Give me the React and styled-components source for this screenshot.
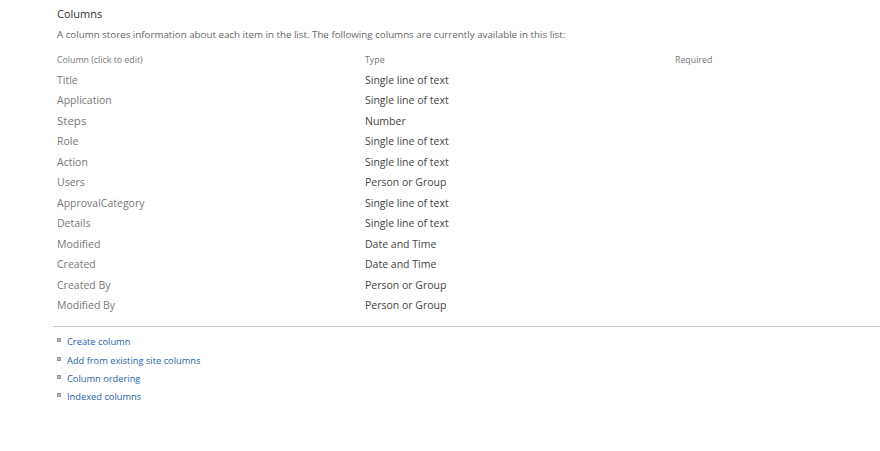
import React from "react";
import styled, { createGlobalStyle } from "styled-components";

const Global = createGlobalStyle`
  html, body { margin: 0; padding: 0; background: #fff; }
  body { font-family: "Open Sans", "Noto Sans", sans-serif; }
`;

const Page = styled.div`
  width: 880px;
  height: 451px;
  padding: 6px 0 0 53px;
  box-sizing: border-box;
  overflow: hidden;
`;

const Section = styled.div`
  padding-left: 4px;
`;

const Heading = styled.div`
  font-size: 11px;
  color: #333;
  line-height: 16px;
`;

const Desc = styled.div`
  font-size: 9.75px;
  color: #666;
  margin-top: 5px;
  line-height: 16px;
`;

const Grid = styled.div`
  display: grid;
  grid-template-columns: 308px 310px 1fr;
  margin-top: 9px;
`;

const HeadCell = styled.div`
  font-size: 8.8px;
  color: #777;
  line-height: 16px;
  height: 16px;
  margin-bottom: 2px;
`;

const Cell = styled.div`
  font-size: ${(p) => (p.$big ? "11.5px" : "10.5px")};
  color: ${(p) => (p.$dark ? "#444" : "#777")};
  line-height: 20.45px;
  white-space: nowrap;
`;

const Divider = styled.hr`
  border: 0;
  border-top: 1px solid #c6c6c6;
  margin: 11px 0 0 0;
`;

const Links = styled.ul`
  list-style: none;
  margin: 5px 0 0 4px;
  padding: 0;
`;

const LinkItem = styled.li`
  display: flex;
  align-items: center;
  gap: 6px;
  height: 18.4px;
`;

const Bullet = styled.span`
  width: 4px;
  height: 4px;
  background: #b9b9b9;
  border: 0.5px solid #9a9a9a;
  box-sizing: border-box;
  margin-top: -3px;
`;

const Link = styled.a`
  font-size: 9.3px;
  color: #1f62a6;
  text-decoration: none;
`;

const rows = [
  ["Title", "Single line of text"],
  ["Application", "Single line of text"],
  ["Steps", "Number", true],
  ["Role", "Single line of text"],
  ["Action", "Single line of text"],
  ["Users", "Person or Group"],
  ["ApprovalCategory", "Single line of text"],
  ["Details", "Single line of text"],
  ["Modified", "Date and Time"],
  ["Created", "Date and Time"],
  ["Created By", "Person or Group"],
  ["Modified By", "Person or Group"],
];

const links = [
  "Create column",
  "Add from existing site columns",
  "Column ordering",
  "Indexed columns",
];

export default function App() {
  return (
    <Page>
      <Global />
      <Section>
        <Heading>Columns</Heading>
        <Desc>
          A column stores information about each item in the list. The following columns are currently available in this list:
        </Desc>
        <Grid>
          <HeadCell>Column (click to edit)</HeadCell>
          <HeadCell>Type</HeadCell>
          <HeadCell>Required</HeadCell>
          {rows.map(([name, type, big]) => (
            <React.Fragment key={name}>
              <Cell $big={big}>{name}</Cell>
              <Cell $dark>{type}</Cell>
              <Cell />
            </React.Fragment>
          ))}
        </Grid>
      </Section>
      <Divider />
      <Links>
        {links.map((l) => (
          <LinkItem key={l}>
            <Bullet />
            <Link href="#">{l}</Link>
          </LinkItem>
        ))}
      </Links>
    </Page>
  );
}
